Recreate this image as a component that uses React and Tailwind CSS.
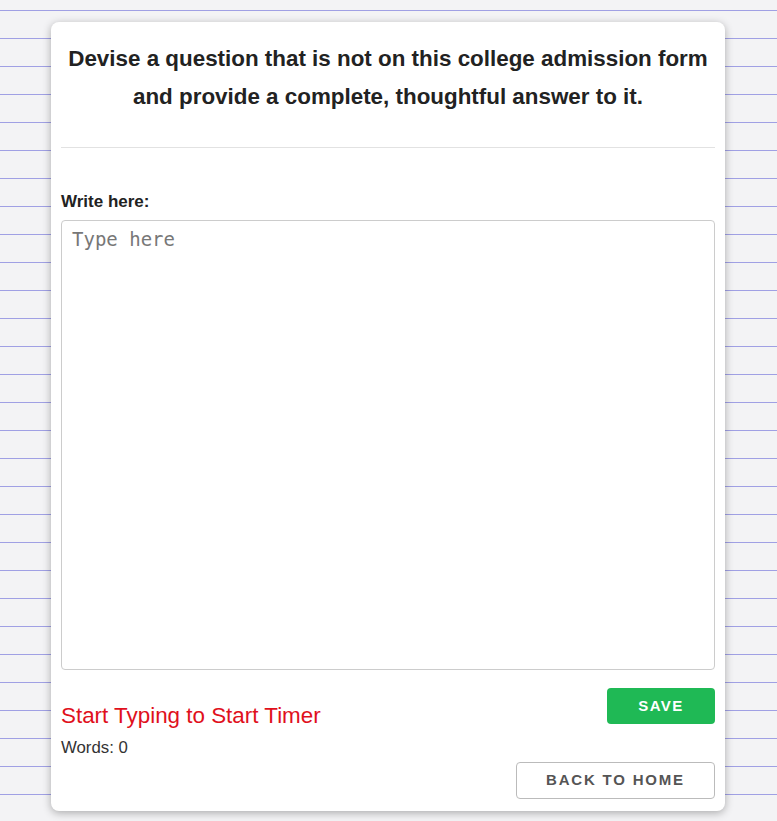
export default function App() {
  return (
    <div className="min-h-screen bg-[#f3f3f5] bg-[linear-gradient(#a0a0e4_1px,transparent_1px)] bg-[length:100%_28px] bg-[position:0_10px] pt-[22px] pb-[10px] font-['Liberation_Sans',Arial,sans-serif]">
      <div className="ml-[51px] w-[674px] rounded-lg bg-white px-[10px] pb-[12px] shadow-[0_2px_8px_rgba(0,0,0,0.3)]">
        {/* Prompt */}
        <h2 className="pt-[18px] text-center text-[22.4px] font-bold leading-[38px] text-[#222]">
          Devise a question that is not on this college admission form
          <br />
          and provide a complete, thoughtful answer to it.
        </h2>
        <div className="mt-[31px] h-px bg-[#e2e2e2]" />

        <label className="mt-[44px] block text-[17px] font-bold leading-[19px] text-[#222]">Write here:</label>
        <textarea
          placeholder="Type here"
          className="mt-[9px] block h-[450px] w-full resize-none rounded border border-[#cccccc] px-[10px] py-[6px] font-['DejaVu_Sans_Mono',monospace] text-[19px] leading-[24px] text-[#333] placeholder:text-[#777] outline-none"
        />

        <div className="mt-[18px] flex items-start justify-between">
          <div className="pt-[15px]">
            <p className="text-[22.4px] leading-[26px] text-[#e0101c]">Start Typing to Start Timer</p>
            <p className="mt-[9px] text-[16.8px] leading-[19px] text-[#333]">Words: 0</p>
          </div>
          <div className="flex flex-col items-end gap-[38px]">
            <button className="h-[36px] w-[108px] rounded bg-[#1fb955] text-[15px] font-bold tracking-[1.5px] text-white">
              SAVE
            </button>
            <button className="h-[37px] w-[199px] rounded border border-[#bbbbbb] bg-white text-[15px] font-bold tracking-[1.8px] text-[#555]">
              BACK TO HOME
            </button>
          </div>
        </div>
      </div>
    </div>
  )
}
